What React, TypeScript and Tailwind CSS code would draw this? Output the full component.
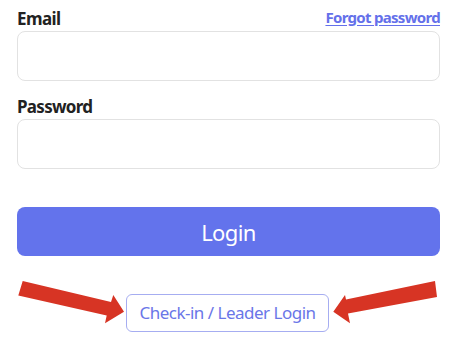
import React from "react";

export default function App() {
  return (
    <div
      className="relative w-[459px] h-[341px] bg-white pl-[17px] pr-[19px] pt-[6px]"
      style={{ fontFamily: '"Noto Sans", "Open Sans", sans-serif' }}
    >
      <div className="flex items-end justify-between h-[25px]">
        <label className="text-[17px] font-bold text-[#222] leading-[24px] tracking-[-0.6px]">Email</label>
        <a href="#" className="mb-[3px] text-[15px] font-bold text-[#6470ea] underline underline-offset-[2px] leading-[22px] tracking-[-0.7px]">
          Forgot password
        </a>
      </div>
      <input className="mt-[0px] block w-full h-[50px] rounded-[8px] border border-[#e2e2e2] bg-white" />
      <div className="mt-[13px] h-[25px] flex items-end">
        <label className="text-[17px] font-bold text-[#222] leading-[24px] tracking-[-0.7px]">Password</label>
      </div>
      <input type="password" className="block w-full h-[50px] rounded-[8px] border border-[#e2e2e2] bg-white" />
      <button className="mt-[38px] block w-full h-[49px] rounded-[8px] bg-[#6373ec] text-white text-[22px] leading-none tracking-[-0.6px]">
        Login
      </button>
      <div className="mt-[38px] flex justify-center pr-[2px]">
        <button className="h-[38px] w-[203px] rounded-[6px] border border-[#a6adf1] text-[#6a76e8] text-[17px] bg-white tracking-[-0.5px]">
          Check-in / Leader Login
        </button>
      </div>
      <svg className="absolute left-0 top-0 pointer-events-none" width="459" height="341" viewBox="0 0 459 341">
        <polygon
          fill="#d73424"
          points="22.7,281 111,302 113.3,295 124,311.7 105,323.3 106.7,315.5 18.3,295.5"
        />
        <polygon
          fill="#d73424"
          points="435,281 437,297 348,313.5 350,323.3 333.3,311.7 345,295 346,299.5"
        />
      </svg>
    </div>
  );
}
